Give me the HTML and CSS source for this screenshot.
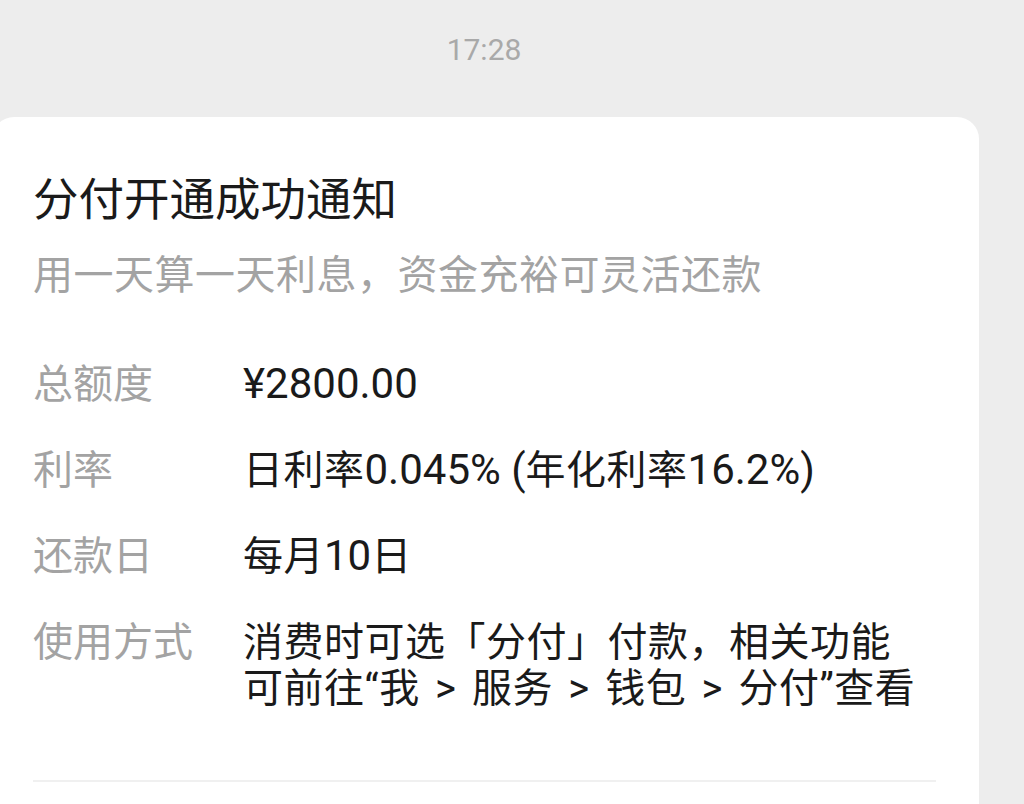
FILE: index.html
```html
<!DOCTYPE html>
<html lang="zh-CN">
<head>
<meta charset="utf-8">
<title>分付开通成功通知</title>
<link rel="stylesheet" href="styles.css">
</head>
<body>
  <div class="time">17:28</div>
  <div class="card">
    <div class="title">分付开通成功通知</div>
    <div class="subtitle">用一天算一天利息，资金充裕可灵活还款</div>
    <div class="rows">
      <div class="row">
        <div class="label">总额度</div>
        <div class="value"><span class="num">¥2800.00</span></div>
      </div>
      <div class="row">
        <div class="label">利率</div>
        <div class="value">日利率<span class="num">0.045% (</span>年化利率<span class="num">16.2%)</span></div>
      </div>
      <div class="row">
        <div class="label">还款日</div>
        <div class="value">每月<span class="num">10</span>日</div>
      </div>
      <div class="row">
        <div class="label">使用方式</div>
        <div class="value">
          <div class="line">消费时可选「分付」付款，相关功能</div>
          <div class="line path">可前往“我 &gt; 服务 &gt; 钱包 &gt; 分付”查看</div>
        </div>
      </div>
    </div>
    <div class="divider"></div>
  </div>
</body>
</html>
```
FILE: styles.css
```css
html, body {
  margin: 0;
  padding: 0;
}
body {
  background: #ededed;
  font-family: "Noto Sans CJK SC", "Noto Sans", sans-serif;
  width: 1024px;
  height: 804px;
  overflow: hidden;
}
.time {
  padding-top: 30px;
  height: 40px;
  line-height: 40px;
  margin-bottom: 47px;
  text-align: center;
  font-family: Roboto, "Noto Sans", sans-serif;
  font-size: 30px;
  color: #a9a9a9;
  margin-left: -56px;
}
.card {
  margin-left: -8px;
  width: 987px;
  box-sizing: border-box;
  background: #ffffff;
  border-radius: 22px 22px 0 0;
  padding: 51px 43px 40px 41px;
}
.title {
  font-size: 45.5px;
  line-height: 56px;
  color: #1a1a1a;
}
.subtitle {
  margin-top: 23px;
  font-size: 40px;
  line-height: 50px;
  color: #a3a3a3;
  letter-spacing: 0.5px;
}
.rows {
  margin-top: 59px;
  display: flex;
  flex-direction: column;
  gap: 36px;
}
.row {
  display: flex;
}
.label {
  width: 210px;
  flex: none;
  font-size: 40px;
  line-height: 50px;
  color: #a3a3a3;
}
.value {
  font-size: 40px;
  line-height: 50px;
  color: #1a1a1a;
  letter-spacing: 0.5px;
}
.num {
  font-family: Roboto, "Noto Sans", sans-serif;
  font-size: 42px;
  line-height: 0;
  letter-spacing: 0;
}
.line {
  white-space: nowrap;
  height: 50px;
}
.path {
  font-family: Roboto, "Noto Sans CJK SC", sans-serif;
  word-spacing: 5px;
}
.divider {
  margin-top: 66px;
  height: 2px;
  background: #f0f0f0;
}
```
